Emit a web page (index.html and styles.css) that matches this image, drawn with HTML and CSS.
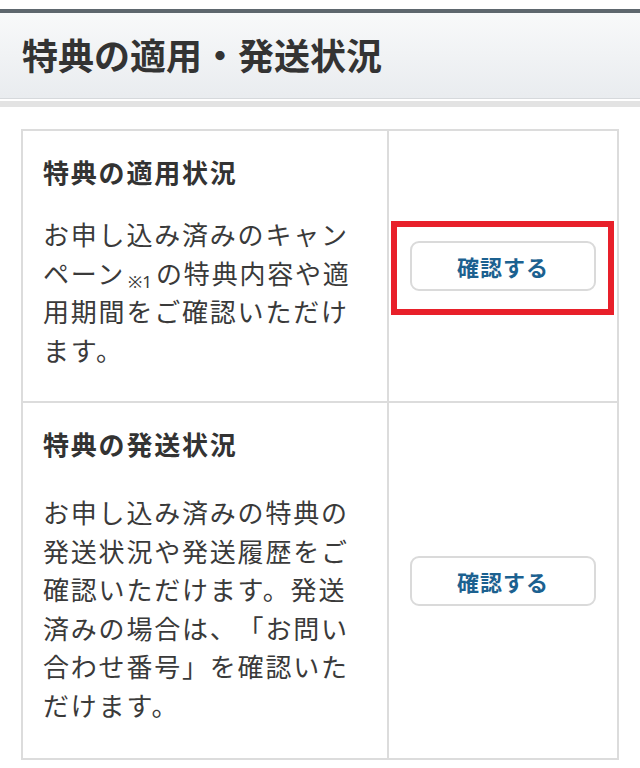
FILE: index.html
```html
<!DOCTYPE html>
<html lang="ja">
<head>
  <meta charset="UTF-8">
  <title>特典の適用・発送状況</title>
  <link rel="stylesheet" href="styles.css">
</head>
<body>
  <div class="head">
    <h1>特典の適用・発送状況</h1>
  </div>

  <div class="content">
    <div class="status-table">
      <div class="cell info">
        <h2>特典の適用状況</h2>
        <p>お申し込み済みのキャンペーン<span class="note">※1</span>の特典内容や適用期間をご確認いただけます。</p>
      </div>
      <div class="cell action">
        <button class="btn marked">確認する</button>
      </div>

      <div class="cell info loose">
        <h2>特典の発送状況</h2>
        <p>お申し込み済みの特典の発送状況や発送履歴をご確認いただけます。発送済みの場合は、「お問い合わせ番号」を確認いただけます。</p>
      </div>
      <div class="cell action">
        <button class="btn">確認する</button>
      </div>
    </div>
  </div>
</body>
</html>
```

FILE: styles.css
```css
body { margin: 0; background: #fff; color: #333; font-family: "Noto Sans CJK JP", "Noto Sans", sans-serif; text-spacing-trim: space-all; }

/* page header */
.head { margin-top: 9px; border-top: 4px solid #5e676e; border-bottom: 6px solid #e3e3e3; padding-bottom: 2px; }
h1 { margin: 0; padding: 0 22px; height: 85px; line-height: 82px; font-size: 36px; font-weight: bold; color: #333;
  background: linear-gradient(#f8f9fa, #e9ecef); border-bottom: 1px solid #d6d9dc; }

.content { padding: 22px 21px; }

/* two column status table */
.status-table { display: grid; grid-template-columns: 1fr 230px; border-top: 2px solid #dcdcdc; border-left: 2px solid #dcdcdc; }
.cell { border-right: 2px solid #dcdcdc; border-bottom: 2px solid #dcdcdc; }
.info { padding: 22px 21px 32px 20px; }
.info h2 { margin: 0 0 24px; font-size: 26px; line-height: 38px; letter-spacing: 1.8px; font-weight: bold; color: #333; }
.info p { margin: 0; font-size: 26px; line-height: 38.5px; letter-spacing: 1.8px; color: #3a3a3a; }
.info.loose { padding-bottom: 34px; }
.info.loose h2 { margin-bottom: 30px; }
.note { font-family: "Noto Sans", sans-serif; font-size: 17px; line-height: 1; vertical-align: -4px; margin: 0 4px 0 3px; letter-spacing: 0; }

.action { display: flex; align-items: center; justify-content: center; }
.btn { width: 186px; height: 50px; background: #fff; border: 2px solid #dadada; border-radius: 9px;
  font-family: inherit; font-size: 22px; font-weight: bold; letter-spacing: 1px; color: #1c6190; }

/* red annotation frame over the first button */
.marked { position: relative; }
.marked::after { content: ""; position: absolute; left: -21px; top: -22px; right: -20px; bottom: -26px; border: 6px solid #e8202a; }
```
